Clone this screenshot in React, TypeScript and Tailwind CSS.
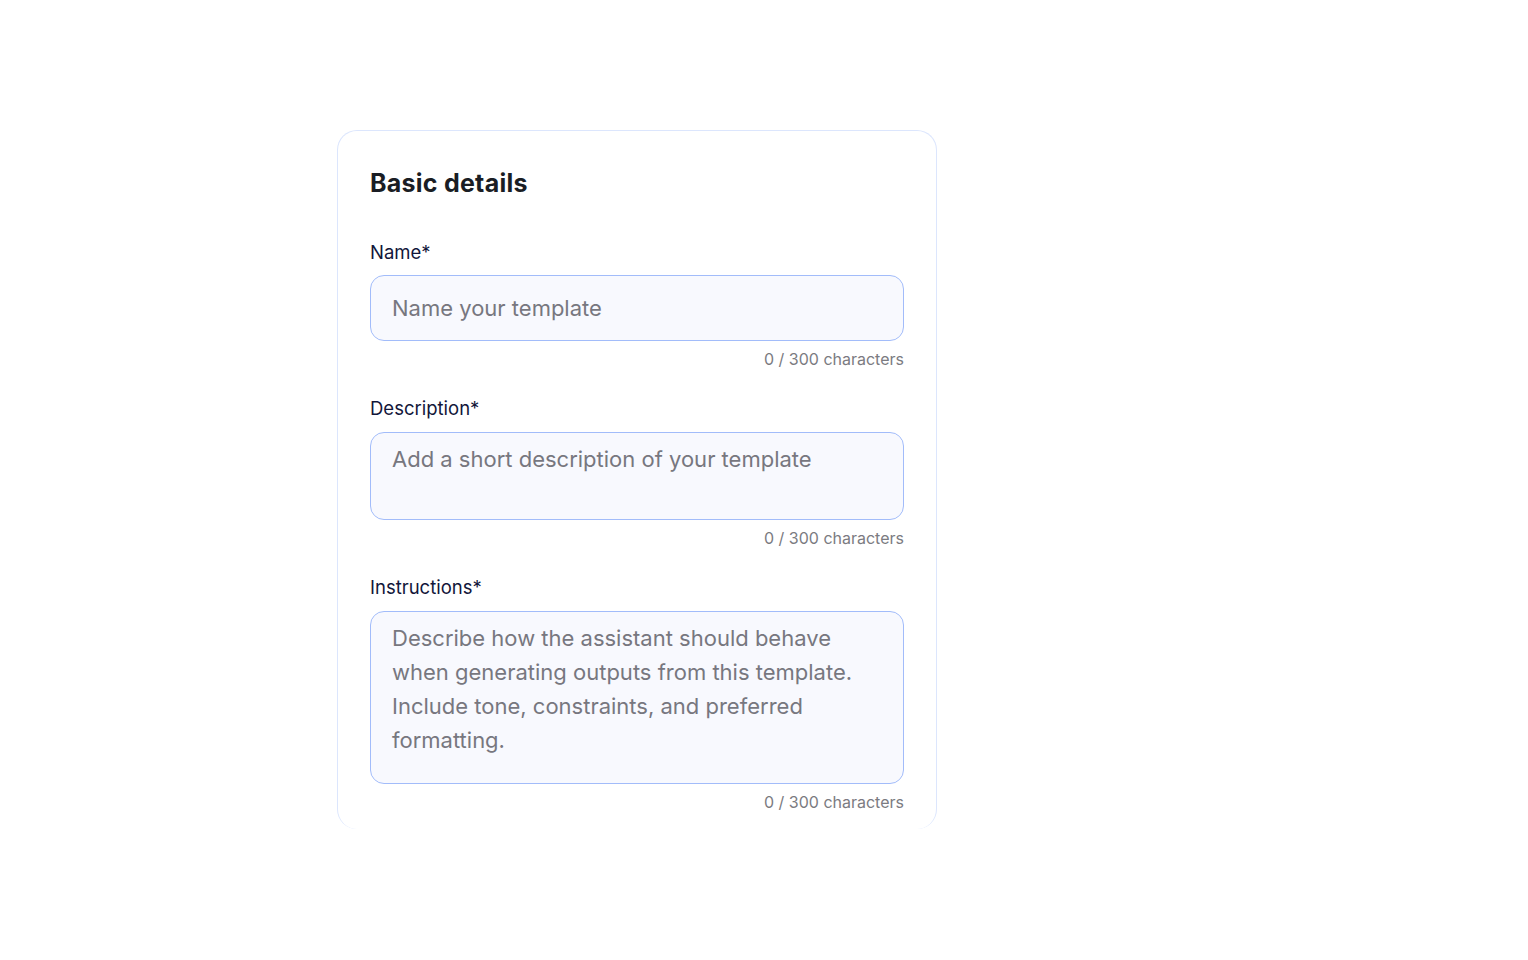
import React from "react";

const fieldClass =
  "block w-full rounded-[14px] border border-[#a2bcfa] bg-[#f8f9fe] px-[21px] text-[22px] text-[#1a1d24] placeholder:text-[#77777f] outline-none resize-none";

function Counter() {
  return (
    <div className="mt-[6px] text-right text-[16px] leading-6 text-[#7b7b81]">
      0 / 300 characters
    </div>
  );
}

function Label({ children }: { children: React.ReactNode }) {
  return (
    <label className="block text-[18.5px] leading-6 text-[#12163a]">
      {children}
    </label>
  );
}

export default function App() {
  return (
    <div className="min-h-screen bg-white font-['Inter',sans-serif]">
      <div className="pt-[130px] pl-[337px]">
        <div className="w-[600px] rounded-[20px] border border-b-0 border-[#dce6fd] px-8 pt-9 pb-[15px]">
          <h2 className="text-[25px] leading-8 font-bold tracking-[0.01em] text-[#1a1d24]">
            Basic details
          </h2>

          <div className="mt-[41px]">
            <Label>Name*</Label>
            <input
              className={`${fieldClass} mt-[11px] h-[66px]`}
              placeholder="Name your template"
            />
            <Counter />
          </div>

          <div className="mt-[25px]">
            <Label>Description*</Label>
            <textarea
              className={`${fieldClass} mt-3 h-[88px] pt-[9px] leading-[34px]`}
              placeholder="Add a short description of your template"
            />
            <Counter />
          </div>

          <div className="mt-[25px]">
            <Label>Instructions*</Label>
            <textarea
              className={`${fieldClass} mt-3 h-[173px] pt-[9px] leading-[34px]`}
              placeholder={
                "Describe how the assistant should behave\nwhen generating outputs from this template.\nInclude tone, constraints, and preferred\nformatting."
              }
            />
            <Counter />
          </div>
        </div>
      </div>
    </div>
  );
}
